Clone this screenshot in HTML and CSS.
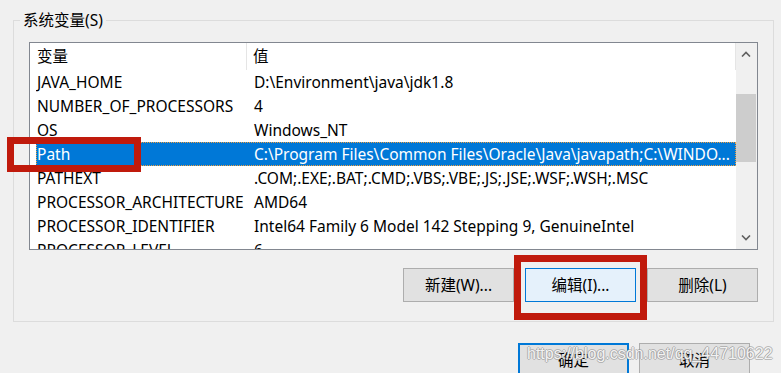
FILE: index.html
```html
<!DOCTYPE html>
<html lang="zh-CN">
<head>
<meta charset="utf-8">
<title>系统变量</title>
<link rel="stylesheet" href="styles.css">
</head>
<body>
<div class="dialog">
  <div class="group">
    <span class="legend">系统变量(S)</span>
    <div class="listbox">
      <div class="list-main">
        <div class="header">
          <div class="hcol1">变量</div>
          <div class="hcol2">值</div>
        </div>
        <div class="row"><div class="cells"><div class="c1">JAVA_HOME</div><div class="c2">D:\Environment\java\jdk1.8</div></div></div>
        <div class="row"><div class="cells"><div class="c1">NUMBER_OF_PROCESSORS</div><div class="c2">4</div></div></div>
        <div class="row"><div class="cells"><div class="c1">OS</div><div class="c2">Windows_NT</div></div></div>
        <div class="row selected"><div class="cells"><div class="c1">Path</div><div class="c2">C:\Program Files\Common Files\Oracle\Java\javapath;C:\WINDO...</div></div></div>
        <div class="row"><div class="cells"><div class="c1">PATHEXT</div><div class="c2">.COM;.EXE;.BAT;.CMD;.VBS;.VBE;.JS;.JSE;.WSF;.WSH;.MSC</div></div></div>
        <div class="row"><div class="cells"><div class="c1">PROCESSOR_ARCHITECTURE</div><div class="c2">AMD64</div></div></div>
        <div class="row"><div class="cells"><div class="c1">PROCESSOR_IDENTIFIER</div><div class="c2">Intel64 Family 6 Model 142 Stepping 9, GenuineIntel</div></div></div>
        <div class="row"><div class="cells"><div class="c1">PROCESSOR_LEVEL</div><div class="c2">6</div></div></div>
      </div>
      <div class="scrollbar">
        <div class="sb-btn">
          <svg width="10" height="6" viewBox="0 0 10 6"><path d="M1 5.5 L5 1.5 L9 5.5" fill="none" stroke="#606060" stroke-width="1.6"/></svg>
        </div>
        <div class="sb-track">
          <div class="sb-thumb"></div>
        </div>
        <div class="sb-btn">
          <svg width="10" height="6" viewBox="0 0 10 6"><path d="M1 0.5 L5 4.5 L9 0.5" fill="none" stroke="#606060" stroke-width="1.6"/></svg>
        </div>
      </div>
    </div>
    <div class="btn-row">
      <button class="btn">新建(W)...</button>
      <button class="btn btn-focus">编辑(I)...</button>
      <button class="btn">删除(L)</button>
    </div>
  </div>
  <div class="footer">
    <button class="btn btn-default">确定</button>
    <button class="btn">取消</button>
  </div>
  <div class="mark mark-path"></div>
  <div class="mark mark-edit"></div>
  <div class="watermark">https://blog.csdn.net/qq_44710622</div>
</div>
</body>
</html>
```
FILE: styles.css
```css
* { box-sizing: border-box; }

html, body {
  margin: 0;
  padding: 0;
}

body {
  background: #f0f0f0;
  font-family: "Noto Sans", "Noto Sans CJK SC", sans-serif;
  font-size: 15.5px;
  color: #000;
  width: 781px;
  height: 373px;
  overflow: hidden;
}

.dialog {
  position: relative;
  width: 781px;
  height: 373px;
  padding-top: 20px;
}

.group {
  position: relative;
  margin-left: 13px;
  width: 761px;
  height: 302px;
  border: 1px solid #dcdcdc;
  padding: 21px 15px 0 15px;
}

.legend {
  position: absolute;
  top: -12px;
  left: 6px;
  padding: 0 3px;
  background: #f0f0f0;
  line-height: 22px;
  white-space: nowrap;
}

.listbox {
  display: flex;
  height: 208px;
  border: 1px solid #828790;
  background: #fff;
}

.list-main {
  width: 706px;
  overflow: hidden;
}

.header {
  display: flex;
  height: 27px;
  line-height: 27px;
  border-right: 1px solid #e5e5e5;
}

.hcol1 {
  width: 217px;
  padding-left: 7px;
  border-right: 1px solid #e5e5e5;
}

.hcol2 {
  flex: 1;
  padding-left: 6px;
}

.row {
  height: 24px;
  padding-left: 6px;
  line-height: 24px;
  white-space: nowrap;
}

.cells {
  display: flex;
  height: 24px;
}

.c1 {
  width: 212px;
  padding-left: 1px;
  overflow: hidden;
}

.c2 {
  flex: 1;
  padding-left: 6px;
  overflow: hidden;
}

.row.selected .cells {
  background: #0078d7;
  color: #fff;
  outline: 1px dotted #f0a040;
  outline-offset: -1px;
}

.scrollbar {
  width: 21px;
  display: flex;
  flex-direction: column;
  background: #f0f0f0;
}

.sb-btn {
  height: 22px;
  display: flex;
  align-items: center;
  justify-content: center;
  padding-right: 1px;
}

.sb-track {
  flex: 1;
  padding-top: 29px;
}

.sb-thumb {
  width: 20px;
  height: 68px;
  background: #cdcdcd;
}

.btn-row {
  display: flex;
  justify-content: flex-end;
  gap: 11px;
  margin-top: 18px;
}

.btn {
  width: 111px;
  height: 34px;
  background: #e1e1e1;
  border: 1px solid #adadad;
  font-family: "Noto Sans", "Noto Sans CJK SC", sans-serif;
  font-size: 15.5px;
  color: #000;
  padding: 0;
  line-height: 30px;
}

.btn-focus {
  background: #e5f1fb;
  border-color: #0078d7;
}

.btn-default {
  border: 2px solid #0078d7;
}

.footer {
  display: flex;
  justify-content: flex-end;
  gap: 10px;
  padding-right: 31px;
  margin-top: 21px;
}

.mark {
  position: absolute;
  border: 7px solid #c01a0c;
}

.mark-path {
  left: 7px;
  top: 137px;
  width: 134px;
  height: 35px;
}

.mark-edit {
  left: 514px;
  top: 255px;
  width: 133px;
  height: 65px;
}

.watermark {
  position: absolute;
  left: 527px;
  top: 344px;
  font-family: "Liberation Sans", Arial, sans-serif;
  font-size: 16px;
  line-height: 20px;
  color: rgba(255, 255, 255, 0.9);
  text-shadow: 1px 0 0 rgba(140, 140, 140, 0.55), -1px 0 0 rgba(140, 140, 140, 0.55), 0 1px 0 rgba(140, 140, 140, 0.55), 0 -1px 0 rgba(140, 140, 140, 0.55);
  white-space: nowrap;
  pointer-events: none;
}
```
